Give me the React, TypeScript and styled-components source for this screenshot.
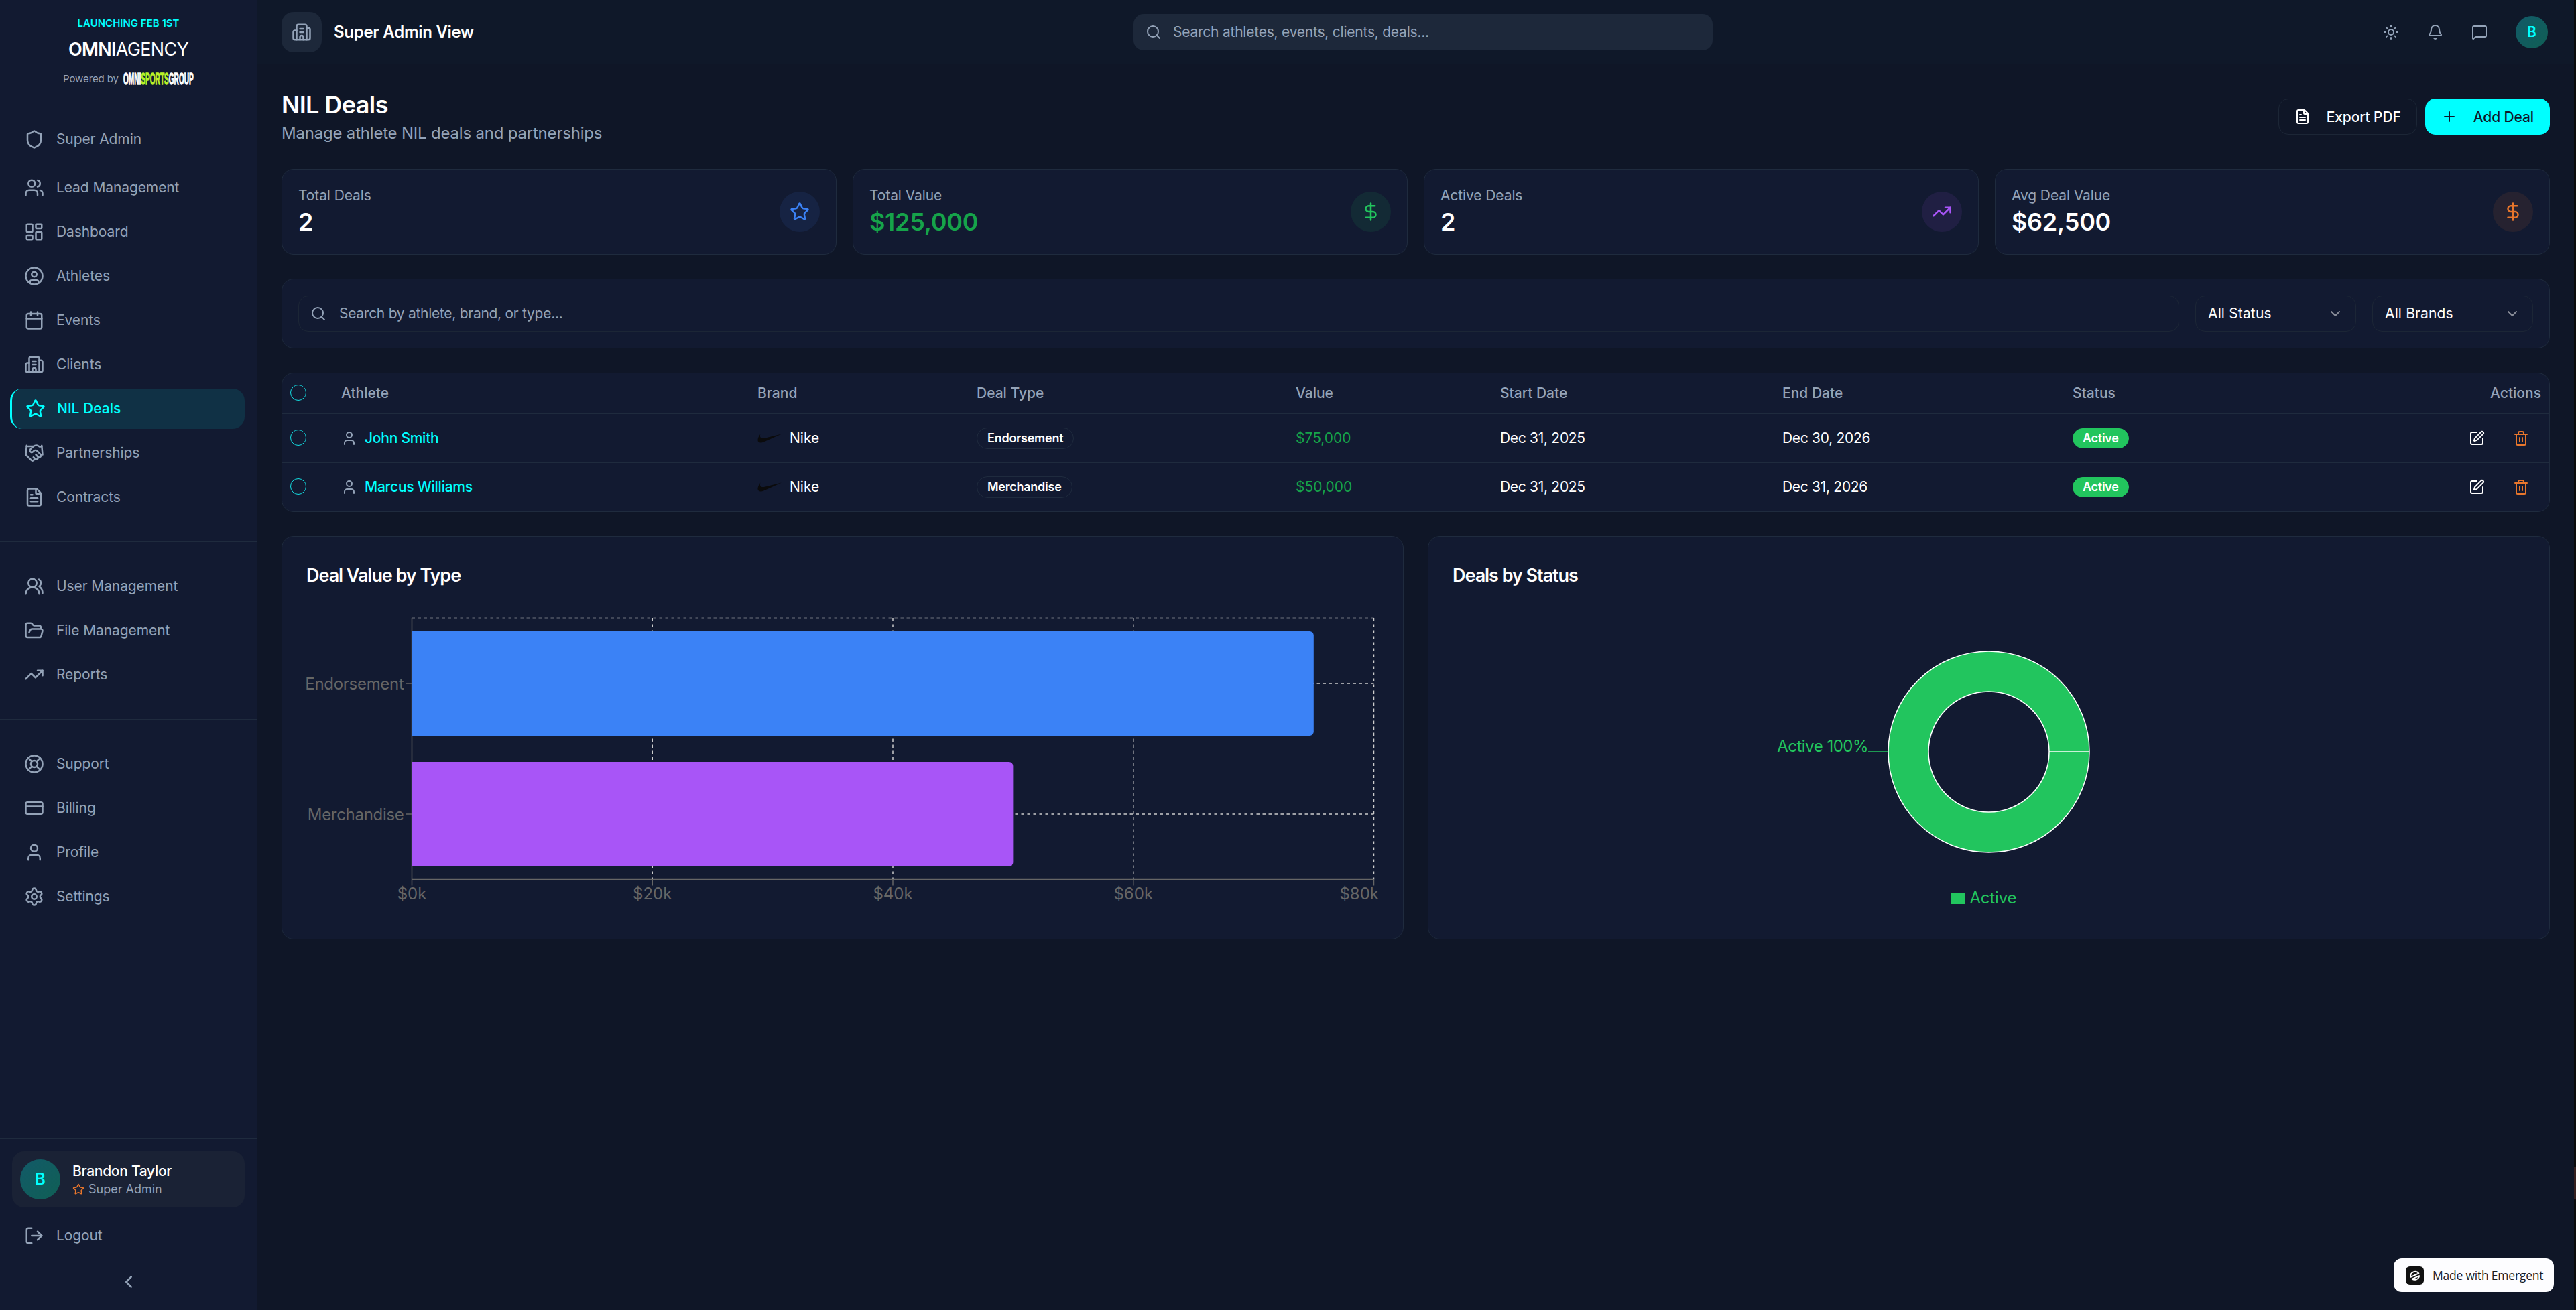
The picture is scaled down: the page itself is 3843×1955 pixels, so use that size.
import React from 'react'
import styled, { createGlobalStyle } from 'styled-components'
import {
  Bell,
  Building2,
  Calendar,
  ChevronDown,
  ChevronLeft,
  CircleUser,
  CreditCard,
  DollarSign,
  FileText,
  FolderOpen,
  Handshake,
  LayoutDashboard,
  LifeBuoy,
  LogOut,
  MessageSquare,
  Plus,
  Search,
  Settings,
  Shield,
  SquarePen,
  Star,
  Sun,
  Trash2,
  TrendingUp,
  User,
  Users,
  UsersRound,
} from 'lucide-react'

const colors = {
  page: '#0f1627',
  panel: '#121a31',
  line: '#1f2b3e',
  faintLine: '#1c2636',
  raised: '#1d283a',
  muted: '#94a3b8',
  accent: '#00ffff',
  green: '#22c55e',
  darkGreen: '#16a34a',
  blue: '#3b82f6',
  purple: '#a855f7',
  orange: '#e8762c',
}

const GlobalStyle = createGlobalStyle`
  * {
    box-sizing: border-box;
  }

  body {
    margin: 0;
    background: #0b0b0c;
    color: #fff;
    font-family: Inter, "Liberation Sans", sans-serif;
    font-size: 21px;
    line-height: 30px;
  }

  svg {
    flex-shrink: 0;
    display: block;
  }
`

const Shell = styled.div`
  display: grid;
  grid-template-columns: 384px 1fr 3px;
  height: 1955px;
`

/* Sidebar */

const Sidebar = styled.aside`
  display: flex;
  flex-direction: column;
  background: ${colors.panel};
  border-right: 1px solid ${colors.line};
`

const Brand = styled.div`
  display: flex;
  flex-direction: column;
  align-items: center;
  height: 154px;
  padding-top: 24px;
  border-bottom: 1px solid ${colors.line};
`

const Launching = styled.div`
  color: ${colors.accent};
  font-size: 15px;
  font-weight: 600;
  line-height: 22px;
`

const Wordmark = styled.div`
  margin-top: 7px;
  font-size: 27px;
  line-height: 42px;
  letter-spacing: -0.7px;

  b {
    font-weight: 600;
  }
`

const PoweredBy = styled.div`
  display: flex;
  align-items: center;
  gap: 7px;
  height: 22px;
  margin-top: 12px;
  color: ${colors.muted};
  font-size: 15px;
  line-height: 22px;
  letter-spacing: -0.1px;
`

/* Very condensed lettering: the text is squeezed to 42% of its own width */
const GroupLogo = styled.div`
  width: 250px;
  margin-right: -145px;
  transform: scaleX(0.42);
  transform-origin: left center;
  color: #fff;
  font-family: "Liberation Sans", sans-serif;
  font-size: 24px;
  font-weight: 700;
  line-height: 28px;
  letter-spacing: 0;
  white-space: nowrap;
  -webkit-text-stroke: 1.3px currentColor;

  em {
    color: #b9f227;
    font-style: normal;
  }
`

const NavGroup = styled.nav`
  display: flex;
  flex-direction: column;
  gap: 6px;
  padding: 36px 18px;
  border-bottom: 1px solid ${colors.line};

  &:first-of-type {
    padding-top: 24px;
  }

  &:last-of-type {
    flex: 1;
  }
`

const NavItem = styled.a<{ $active?: boolean; $spaced?: boolean }>`
  display: flex;
  align-items: center;
  gap: ${(p) => (p.$active ? 17 : 18)}px;
  height: 60px;
  padding-left: 18px;
  border-radius: 18px;
  color: ${colors.muted};
  letter-spacing: -0.1px;
  ${(p) => p.$spaced && 'margin-bottom: 6px;'}
  ${(p) =>
    p.$active &&
    `
    margin-left: -3px;
    padding-left: 20px;
    border-left: 3px solid ${colors.accent};
    background: #103145;
    color: ${colors.accent};
    font-weight: 500;
    letter-spacing: 0;
  `}
`

const SidebarFooter = styled.div`
  display: flex;
  flex-direction: column;
  height: 255px;
  padding: 18px;
`

const UserCard = styled.div`
  display: flex;
  align-items: center;
  gap: 18px;
  height: 84px;
  margin-bottom: 12px;
  padding: 12px;
  border-radius: 18px;
  background: #1a2235;
`

const Avatar = styled.div<{ $size: number }>`
  display: flex;
  align-items: center;
  justify-content: center;
  width: ${(p) => p.$size}px;
  height: ${(p) => p.$size}px;
  border-radius: 50%;
  background: linear-gradient(135deg, #125a68, #105f55);
  color: ${colors.accent};
  font-size: ${(p) => (p.$size > 50 ? 24 : 21)}px;
  font-weight: 600;
`

const UserName = styled.div`
  font-weight: 500;
  line-height: 30px;
  letter-spacing: -0.3px;
`

const UserRole = styled.div`
  display: flex;
  align-items: center;
  gap: 6px;
  color: ${colors.muted};
  font-size: 18px;
  line-height: 24px;
`

const Collapse = styled.div`
  display: flex;
  justify-content: center;
  margin-top: 24px;
  color: ${colors.muted};
`

/* Top bar */

const Main = styled.main`
  display: flex;
  flex-direction: column;
  background: ${colors.page};
`

const TopBar = styled.header`
  display: grid;
  grid-template-columns: 1247px 864px 1fr;
  gap: 24px;
  align-items: center;
  height: 96px;
  padding: 0 39px 0 36px;
  border-bottom: 1px solid ${colors.line};
  background: #0f1829;
`

const ViewTitle = styled.div`
  display: flex;
  align-items: center;
  gap: 18px;
  padding-top: 1px;
  font-size: 24px;
  font-weight: 600;
  letter-spacing: -0.28px;
`

const ViewIcon = styled.div`
  display: flex;
  align-items: center;
  justify-content: center;
  width: 60px;
  height: 60px;
  border-radius: 18px;
  background: ${colors.raised};
  color: ${colors.muted};
`

const GlobalSearch = styled.div`
  display: flex;
  align-items: center;
  gap: 17px;
  height: 54px;
  padding-left: 18px;
  border-radius: 15px;
  background: ${colors.raised};
  color: ${colors.muted};
  letter-spacing: -0.23px;
`

const TopActions = styled.div`
  display: flex;
  align-items: center;
  justify-content: flex-end;
  gap: 42px;
  color: ${colors.muted};
`

/* Page */

const Page = styled.div`
  display: flex;
  flex-direction: column;
  gap: 36px;
  padding: 36px;
`

const PageHeader = styled.div`
  display: flex;
  align-items: center;
  justify-content: space-between;
  height: 84px;
`

const PageTitle = styled.h1`
  margin: 0;
  font-size: 36px;
  font-weight: 600;
  line-height: 48px;
  letter-spacing: -0.6px;
`

const PageSubtitle = styled.p`
  margin: 0;
  padding-top: 1px;
  color: ${colors.muted};
  font-size: 24px;
  line-height: 36px;
  letter-spacing: -0.2px;
`

const Buttons = styled.div`
  display: flex;
  gap: 12px;
`

const Button = styled.button<{ $primary?: boolean }>`
  display: flex;
  align-items: center;
  gap: 24px;
  height: 54px;
  padding: 0 23px;
  border: 1px solid ${(p) => (p.$primary ? colors.accent : colors.faintLine)};
  border-radius: 15px;
  background: ${(p) => (p.$primary ? colors.accent : 'transparent')};
  color: ${(p) => (p.$primary ? '#0f172a' : '#fff')};
  font: 500 21px Inter, sans-serif;
  letter-spacing: -0.12px;
`

const Card = styled.section`
  border: 1px solid ${colors.line};
  border-radius: 18px;
  background: ${colors.panel};
`

const StatGrid = styled.div`
  display: grid;
  grid-template-columns: repeat(4, 1fr);
  gap: 24px;
`

const StatCard = styled(Card)`
  display: flex;
  align-items: center;
  justify-content: space-between;
  height: 128px;
  padding: 24px;
`

const StatLabel = styled.div`
  color: ${colors.muted};
  letter-spacing: -0.1px;
`

const StatValue = styled.div<{ $color?: string }>`
  color: ${(p) => p.$color || '#fff'};
  font-size: 36px;
  font-weight: 600;
  line-height: 48px;
  letter-spacing: -0.3px;
`

const StatIcon = styled.div<{ $color: string }>`
  display: flex;
  align-items: center;
  justify-content: center;
  width: 60px;
  height: 60px;
  border-radius: 50%;
  background: ${(p) => p.$color}18;
  color: ${(p) => p.$color};
`

const FilterCard = styled(Card)`
  display: flex;
  gap: 24px;
  padding: 24px;
`

const FilterSearch = styled.div`
  display: flex;
  flex: 1;
  align-items: center;
  gap: 19px;
  height: 54px;
  padding-left: 17px;
  border: 1px solid ${colors.faintLine};
  border-radius: 15px;
  color: ${colors.muted};
  letter-spacing: -0.28px;
`

const Select = styled.div`
  display: flex;
  align-items: center;
  justify-content: space-between;
  width: 240px;
  height: 54px;
  padding: 0 18px;
  border: 1px solid ${colors.faintLine};
  border-radius: 15px;
  letter-spacing: 0.15px;

  svg {
    opacity: 0.5;
  }
`

/* Table */

const TableRow = styled.div<{ $head?: boolean }>`
  display: grid;
  grid-template-columns: 76px 621px 327px 476px 305px 421px 433px 1fr;
  align-items: center;
  height: ${(p) => (p.$head ? 61 : 73)}px;
  padding-left: 12px;
  border-bottom: 1px solid ${colors.line};

  &:last-child {
    height: 72px;
    border-bottom: none;
  }

  ${(p) => p.$head && `color: ${colors.muted}; font-weight: 500;`}
`

const Cell = styled.div<{ $color?: string; $gap?: number }>`
  display: flex;
  align-items: center;
  gap: ${(p) => p.$gap || 12}px;
  color: ${(p) => p.$color || 'inherit'};
`

const DateCell = styled(Cell)`
  letter-spacing: -0.3px;
`

const LastCells = styled.div`
  display: flex;
  align-items: center;
  justify-content: space-between;
  padding-right: 12px;
`

const Checkbox = styled.div`
  width: 24px;
  height: 24px;
  margin-top: -2px;
  border: 1px solid #12dfe3;
  border-radius: 50%;
`

const AthleteName = styled.a`
  color: ${colors.accent};
  font-weight: 500;
  letter-spacing: -0.25px;
`

const Badge = styled.span<{ $solid?: boolean }>`
  display: flex;
  align-items: center;
  height: ${(p) => (p.$solid ? 30 : 32)}px;
  padding: 0 ${(p) => (p.$solid ? 14 : 15)}px;
  border: 1px solid ${(p) => (p.$solid ? colors.green : colors.line)};
  border-radius: 16px;
  background: ${(p) => (p.$solid ? colors.green : 'transparent')};
  font-size: 18px;
  font-weight: 600;
  letter-spacing: -0.25px;
`

const RowActions = styled.div`
  display: flex;
  gap: 42px;
  padding-right: 18px;
`

/* Charts */

const ChartGrid = styled.div`
  display: grid;
  grid-template-columns: 1fr 1fr;
  gap: 36px;
`

const ChartCard = styled(Card)`
  height: 602px;
  padding: 36px;
`

const ChartTitle = styled.h3`
  margin: 0 0 35px;
  padding-top: 1px;
  font-size: 27px;
  font-weight: 600;
  line-height: 42px;
  letter-spacing: -1.05px;
`

const Chart = styled.svg`
  overflow: visible;
  font-size: 24px;
`

/* Page edge */

const Edge = styled.div`
  padding-top: 1741px;
`

const EdgeThumb = styled.div`
  height: 48px;
  border-top: 1px solid #5a5656;
  background: #35201f;
`

const MadeWith = styled.a`
  position: fixed;
  right: 33px;
  bottom: 27px;
  display: flex;
  align-items: center;
  gap: 13px;
  width: 239px;
  height: 50px;
  padding-left: 18px;
  border-radius: 12px;
  background: #fdfdff;
  color: #1b1b1f;
  font-family: "Open Sans", sans-serif;
  font-size: 17.5px;
  letter-spacing: -0.22px;
  white-space: nowrap;
`

const navGroups: any[] = [
  [
    { label: 'Super Admin', icon: Shield, spaced: true },
    { label: 'Lead Management', icon: Users },
    { label: 'Dashboard', icon: LayoutDashboard },
    { label: 'Athletes', icon: CircleUser },
    { label: 'Events', icon: Calendar },
    { label: 'Clients', icon: Building2 },
    { label: 'NIL Deals', icon: Star, active: true },
    { label: 'Partnerships', icon: Handshake },
    { label: 'Contracts', icon: FileText },
  ],
  [
    { label: 'User Management', icon: UsersRound },
    { label: 'File Management', icon: FolderOpen },
    { label: 'Reports', icon: TrendingUp },
  ],
  [
    { label: 'Support', icon: LifeBuoy },
    { label: 'Billing', icon: CreditCard },
    { label: 'Profile', icon: User },
    { label: 'Settings', icon: Settings },
  ],
]

const stats = [
  { label: 'Total Deals', value: '2', icon: Star, color: colors.blue },
  { label: 'Total Value', value: '$125,000', icon: DollarSign, color: colors.green, valueColor: colors.darkGreen },
  { label: 'Active Deals', value: '2', icon: TrendingUp, color: colors.purple },
  { label: 'Avg Deal Value', value: '$62,500', icon: DollarSign, color: colors.orange },
]

const deals = [
  { athlete: 'John Smith', brand: 'Nike', type: 'Endorsement', value: '$75,000', start: 'Dec 31, 2025', end: 'Dec 30, 2026' },
  { athlete: 'Marcus Williams', brand: 'Nike', type: 'Merchandise', value: '$50,000', start: 'Dec 31, 2025', end: 'Dec 31, 2026' },
]

const dealTypes = [
  { name: 'Endorsement', value: 75, color: colors.blue },
  { name: 'Merchandise', value: 50, color: colors.purple },
]

const Swoosh = () => (
  <svg width="36" height="36" viewBox="0 0 36 36">
    <path d="M36 11.5 L9.8 23.2 Q3 26 0.9 22.4 Q-0.8 18.5 4.6 11.2 Q2.6 16.2 5.6 17.6 Q7.4 18.6 12 17.6 Z" fill="#0b0b0c" />
  </svg>
)

const EmergentLogo = () => (
  <svg width="27" height="27" viewBox="0 0 27 27" fill="none" stroke="#fff" strokeWidth="1.9" strokeLinecap="round" strokeLinejoin="round">
    <rect width="27" height="27" rx="6" fill="#111" stroke="none" />
    <path d="M7.4 15.8 L19.4 10.4 A6.8 6.8 0 0 0 7.4 15.8" />
    <path d="M9.6 18.6 A6.8 6.8 0 0 0 20.2 14.2 L9.6 18.6" />
  </svg>
)

const NavGroupItems = ({ items }: any) => (
  <NavGroup>
    {items.map(({ label, icon: Icon, active, spaced }: any) => (
      <NavItem key={label} $active={active} $spaced={spaced}>
        <Icon size={30} />
        {label}
      </NavItem>
    ))}
  </NavGroup>
)

const ValueByType = () => {
  const left = 157.5
  const top = 7.5
  const width = 1435
  const height = 390
  const bottom = top + height
  const band = height / dealTypes.length
  const x = (k: number) => left + (width * k) / 80

  return (
    <Chart width="1600" height="450">
      <g stroke="#ccc" strokeWidth="1.5" strokeDasharray="4.5 4.5">
        <line x1={left} x2={left + width} y1={top} y2={top} />
        {dealTypes.map((type, i) => (
          <line key={type.name} x1={left} x2={left + width} y1={top + band * (i + 0.5)} y2={top + band * (i + 0.5)} />
        ))}
        {[20, 40, 60, 80].map((k) => (
          <line key={k} x1={x(k)} x2={x(k)} y1={top} y2={bottom} />
        ))}
      </g>
      <g stroke="#666" strokeWidth="1.5">
        <line x1={left} x2={left} y1={top} y2={bottom} />
        <line x1={left} x2={left + width} y1={bottom} y2={bottom} />
        {[0, 20, 40, 60, 80].map((k) => (
          <line key={k} x1={x(k)} x2={x(k)} y1={bottom} y2={bottom + 9} />
        ))}
        {dealTypes.map((type, i) => (
          <line key={type.name} x1={left - 9} x2={left} y1={top + band * (i + 0.5)} y2={top + band * (i + 0.5)} />
        ))}
      </g>
      {dealTypes.map((type, i) => {
        const y = top + band * (i + 0.1)
        const h = band * 0.8
        const end = x(type.value)
        return (
          <path
            key={type.name}
            fill={type.color}
            d={`M${left} ${y}H${end - 6}a6 6 0 0 1 6 6V${y + h - 6}a6 6 0 0 1 -6 6H${left}Z`}
          />
        )
      })}
      <g fill="#666">
        {dealTypes.map((type, i) => (
          <text key={type.name} x={left - 12} y={top + band * (i + 0.5) + 8.5} textAnchor="end" letterSpacing="-0.3">
            {type.name}
          </text>
        ))}
        {[0, 20, 40, 60].map((k) => (
          <text key={k} x={x(k)} y={bottom + 29} textAnchor="middle">{`$${k}k`}</text>
        ))}
        <text x="1600" y={bottom + 29} textAnchor="end">$80k</text>
      </g>
    </Chart>
  )
}

const DealsByStatus = () => (
  <Chart width="1600" height="450">
    <g fill="none">
      <circle cx="800" cy="207" r="120" stroke={colors.green} strokeWidth="60" />
      <g stroke="#fff" strokeWidth="1.5">
        <circle cx="800" cy="207" r="150" />
        <circle cx="800" cy="207" r="90" />
        <line x1="890" x2="950" y1="207" y2="207" />
      </g>
      <line x1="620" x2="650" y1="207" y2="207" stroke={colors.green} strokeWidth="1.5" />
    </g>
    <g fill={colors.green}>
      <text x="620" y="207" textAnchor="end" letterSpacing="-0.5">Active 100%</text>
      <rect x="744" y="418" width="21" height="16" />
      <text x="771.5" y="432.7" letterSpacing="-0.2">Active</text>
    </g>
  </Chart>
)

const App = () => (
  <>
    <GlobalStyle />
    <Shell>
      <Sidebar>
        <Brand>
          <Launching>LAUNCHING FEB 1ST</Launching>
          <Wordmark><b>OMNI</b>AGENCY</Wordmark>
          <PoweredBy>
            Powered by
            <GroupLogo>OMNI<em>SPORTS</em>GROUP</GroupLogo>
          </PoweredBy>
        </Brand>
        {navGroups.map((items, i) => (
          <NavGroupItems key={i} items={items} />
        ))}
        <SidebarFooter>
          <UserCard>
            <Avatar $size={60}>B</Avatar>
            <div>
              <UserName>Brandon Taylor</UserName>
              <UserRole>
                <Star size={18} color={colors.orange} />
                Super Admin
              </UserRole>
            </div>
          </UserCard>
          <NavItem>
            <LogOut size={30} />
            Logout
          </NavItem>
          <Collapse>
            <ChevronLeft size={30} />
          </Collapse>
        </SidebarFooter>
      </Sidebar>

      <Main>
        <TopBar>
          <ViewTitle>
            <ViewIcon>
              <Building2 size={30} />
            </ViewIcon>
            Super Admin View
          </ViewTitle>
          <GlobalSearch>
            <Search size={24} />
            Search athletes, events, clients, deals...
          </GlobalSearch>
          <TopActions>
            <Sun size={24} />
            <Bell size={24} />
            <MessageSquare size={24} />
            <Avatar $size={48}>B</Avatar>
          </TopActions>
        </TopBar>

        <Page>
          <PageHeader>
            <div>
              <PageTitle>NIL Deals</PageTitle>
              <PageSubtitle>Manage athlete NIL deals and partnerships</PageSubtitle>
            </div>
            <Buttons>
              <Button>
                <FileText size={24} />
                Export PDF
              </Button>
              <Button $primary>
                <Plus size={24} />
                Add Deal
              </Button>
            </Buttons>
          </PageHeader>

          <StatGrid>
            {stats.map(({ label, value, icon: Icon, color, valueColor }) => (
              <StatCard key={label}>
                <div>
                  <StatLabel>{label}</StatLabel>
                  <StatValue $color={valueColor}>{value}</StatValue>
                </div>
                <StatIcon $color={color}>
                  <Icon size={30} />
                </StatIcon>
              </StatCard>
            ))}
          </StatGrid>

          <FilterCard>
            <FilterSearch>
              <Search size={24} />
              Search by athlete, brand, or type...
            </FilterSearch>
            <Select>
              All Status
              <ChevronDown size={24} />
            </Select>
            <Select>
              All Brands
              <ChevronDown size={24} />
            </Select>
          </FilterCard>

          <Card>
            <TableRow $head>
              <Checkbox />
              <Cell>Athlete</Cell>
              <Cell>Brand</Cell>
              <Cell>Deal Type</Cell>
              <Cell>Value</Cell>
              <Cell>Start Date</Cell>
              <Cell>End Date</Cell>
              <LastCells>
                <span>Status</span>
                <span>Actions</span>
              </LastCells>
            </TableRow>
            {deals.map((deal) => (
              <TableRow key={deal.athlete}>
                <Checkbox />
                <Cell $gap={11}>
                  <User size={24} color={colors.muted} />
                  <AthleteName>{deal.athlete}</AthleteName>
                </Cell>
                <Cell>
                  <Swoosh />
                  {deal.brand}
                </Cell>
                <Cell>
                  <Badge>{deal.type}</Badge>
                </Cell>
                <Cell $color={colors.darkGreen}>{deal.value}</Cell>
                <DateCell>{deal.start}</DateCell>
                <DateCell>{deal.end}</DateCell>
                <LastCells>
                  <Badge $solid>Active</Badge>
                  <RowActions>
                    <SquarePen size={24} />
                    <Trash2 size={24} color={colors.orange} />
                  </RowActions>
                </LastCells>
              </TableRow>
            ))}
          </Card>

          <ChartGrid>
            <ChartCard>
              <ChartTitle>Deal Value by Type</ChartTitle>
              <ValueByType />
            </ChartCard>
            <ChartCard>
              <ChartTitle>Deals by Status</ChartTitle>
              <DealsByStatus />
            </ChartCard>
          </ChartGrid>
        </Page>
      </Main>

      <Edge>
        <EdgeThumb />
      </Edge>
    </Shell>
    <MadeWith>
      <EmergentLogo />
      Made with Emergent
    </MadeWith>
  </>
)

export default App
